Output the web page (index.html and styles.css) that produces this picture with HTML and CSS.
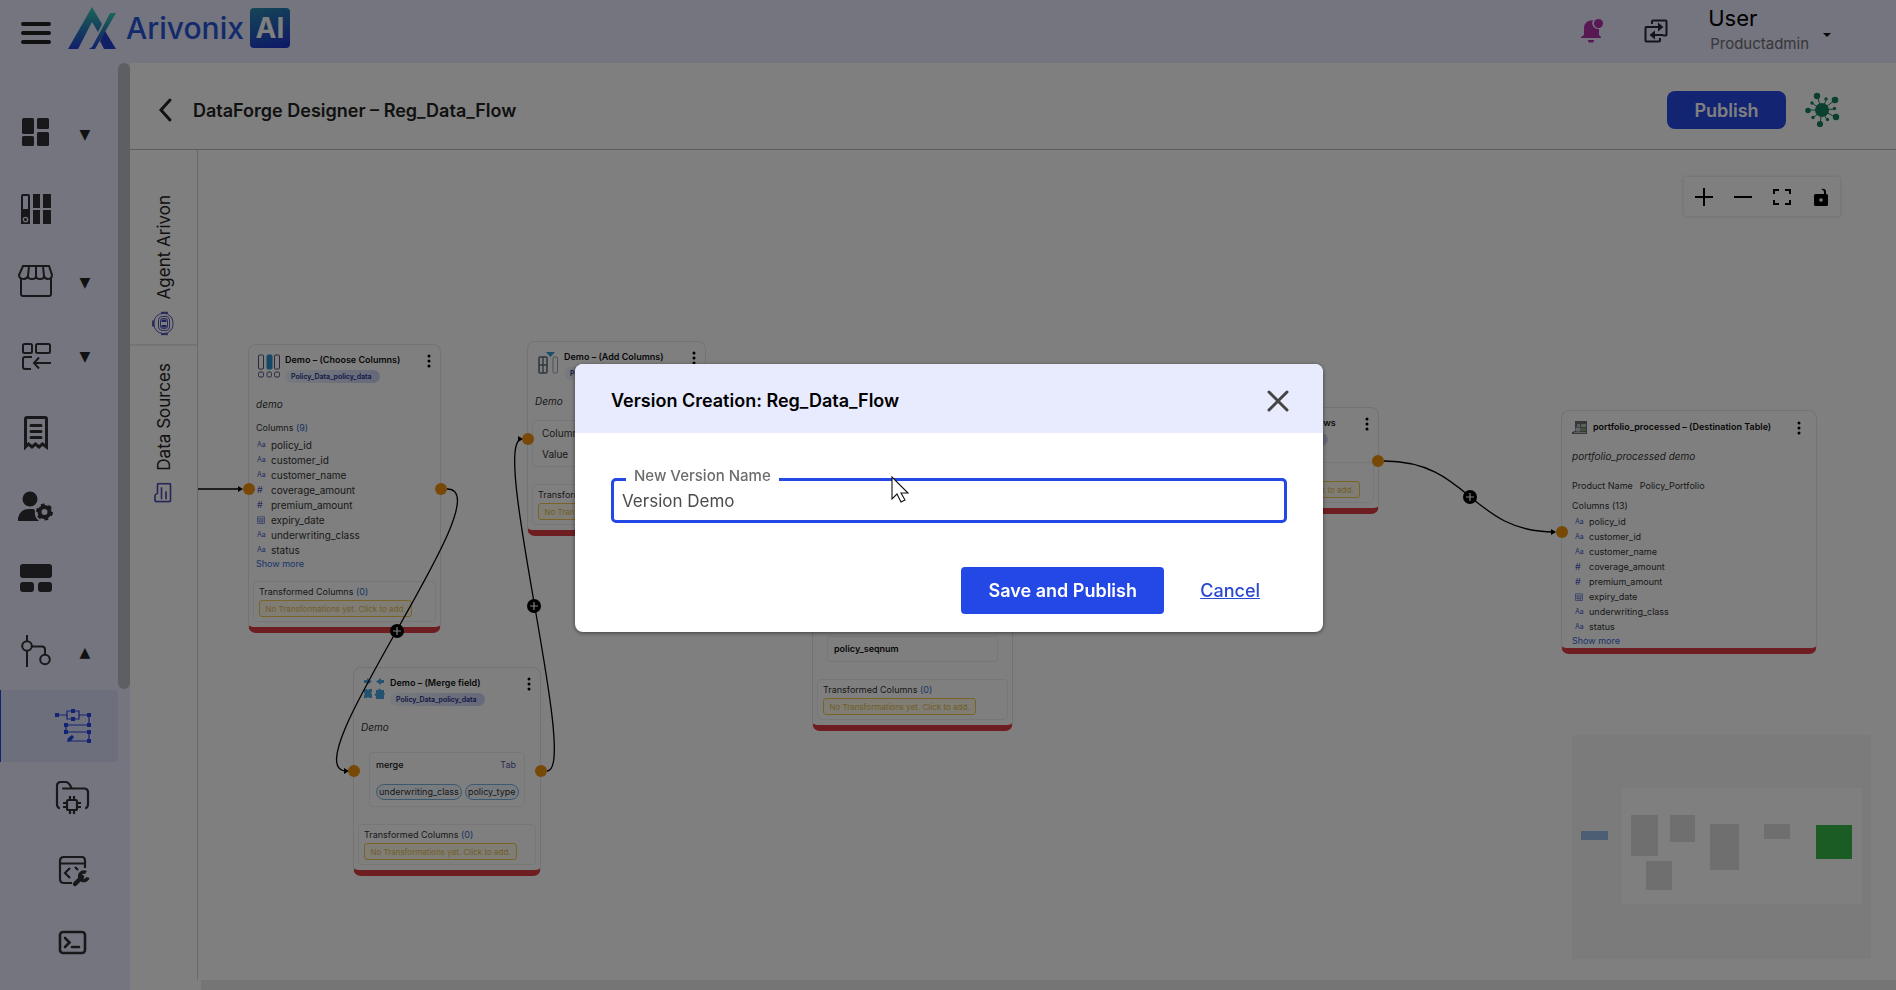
FILE: index.html
```html
<!DOCTYPE html>
<html lang="en">
<head>
<meta charset="utf-8">
<title>DataForge Designer</title>
<link rel="stylesheet" href="styles.css">
</head>
<body>
<svg class="defs" aria-hidden="true">
  <defs>
    <symbol id="dots" viewBox="0 0 4 14"><circle cx="2" cy="2" r="1.5"/><circle cx="2" cy="7" r="1.5"/><circle cx="2" cy="12" r="1.5"/></symbol>
    <symbol id="cal" viewBox="0 0 8 8"><path d="M.5.8h7v6.7h-7zM.5 2.8h7M.5 5.2h7M2.9 2.8v4.7M5.2 2.8v4.7" fill="none" stroke="currentColor" stroke-width=".6"/></symbol>
  </defs>
</svg>
<div class="app">
  <header class="topbar">
    <button class="icon-btn menu-btn" aria-label="Menu"><svg width="30" height="24" viewBox="0 0 30 24"><path d="M2 3h26M2 12h26M2 21h26" stroke="#222" stroke-width="4" stroke-linecap="round"/></svg></button>
    <a href="#" class="brand">
      <svg width="50" height="44" viewBox="0 0 50 44">
        <defs><linearGradient id="lg" x1="0" y1="0" x2="0" y2="1"><stop offset="0" stop-color="#36cdb6"/><stop offset=".5" stop-color="#2a80b8"/><stop offset="1" stop-color="#2340dd"/></linearGradient></defs>
        <path d="M25 1 35 18 31 26 25 16 11 43H1z" fill="url(#lg)"/>
        <path d="M43 7h6L28 43h-6l3-2L39 15z" fill="url(#lg)"/>
        <path d="m38 25 11 18H37l-4-8z" fill="#2340cc"/>
      </svg>
      <span class="brand-name">Arivonix</span><span class="brand-ai">AI</span>
    </a>
    <div class="top-actions">
      <button class="icon-btn" aria-label="Notifications"><svg width="24" height="24" viewBox="0 0 24 24" fill="#b030a8"><path d="M13 1.200A8 8 0 0 0 4 9v7l-3 2v1h20v-1l-2-2v-6A6 6 0 0 1 13 1.200zM8 21h6v1l-1 1.500H9L8 22z"/><circle cx="18.500" cy="4.500" r="4.500"/></svg></button>
      <button class="icon-btn" aria-label="Switch"><svg width="24" height="24" viewBox="0 0 24 24" fill="none" stroke="#26263a" stroke-width="2"><path d="M8 5V2.500q0-1 1-1h12.500q1 0 1 1v13q0 1-1 1H19M16 19v2.500q0 1-1 1H2.500q-1 0-1-1V9q0-1 1-1H12"/><path d="M10 8h6M8 16h11"/><path d="m14 3.500 5.500 4.500-5.500 4.500zM11 11.500 5.500 16l5.500 4.500z" fill="#26263a" stroke="none"/></svg></button>
      <div class="user">
        <div><div class="user-name">User</div><div class="user-role">Productadmin</div></div>
        <button class="icon-btn caret" aria-label="Account menu"><svg width="8" height="4" viewBox="0 0 8 4"><path d="M0 0h8L4 4z" fill="#111"/></svg></button>
      </div>
    </div>
  </header>

  <div class="body">
    <nav class="sidebar">
      <ul class="nav">
        <li><a href="#" aria-label="Dashboard"><svg width="36" height="44" viewBox="0 0 36 44" fill="#303034"><rect x="4" y="6" width="12" height="16" rx="1.500"/><rect x="19" y="6" width="12" height="11" rx="1.500"/><rect x="4" y="24" width="12" height="10" rx="1.500"/><rect x="19" y="20" width="12" height="14" rx="1.500"/></svg><span>▼</span></a></li>
        <li><a href="#" aria-label="Catalog"><svg width="36" height="44" viewBox="0 0 36 44" fill="#303034"><path d="M5 8h5a2 2 0 0 1 2 2v28H3V10a2 2 0 0 1 2-2zm0 2v13h5V10z" fill-rule="evenodd"/><circle cx="7.500" cy="33.500" r="2.200" fill="none" stroke="#e0e0ea" stroke-width="1.300"/><path d="M15 8h7v14h-7zM25 8h8v14h-8zM15 24h7v14h-7zM25 24h8v14h-8z"/></svg></a></li>
        <li><a href="#" aria-label="Marketplace"><svg width="36" height="44" viewBox="0 0 36 44" fill="none" stroke="#303034" stroke-width="2"><path d="M5 6h26l3 9c0 5-7 5-8 1 0 4-8 4-8 0 0 4-8 4-8 0-1 4-9 4-9-1zM11 6l-1 10M18 6v10M25 6l1 10M3 18v16q0 2 2 2h26q2 0 2-2V18"/></svg><span>▼</span></a></li>
        <li><a href="#" aria-label="Ingest"><svg width="36" height="44" viewBox="0 0 36 44" fill="none" stroke="#303034" stroke-width="2"><rect x="5" y="10" width="9" height="9" rx="1.500"/><rect x="18" y="10" width="14" height="9" rx="1.500"/><path d="M14 23H7q-2 0-2 2v8q0 2 2 2h6M33 29H16M21 23.500 16 29l5 5.500"/></svg><span>▼</span></a></li>
        <li><a href="#" aria-label="Reports"><svg width="36" height="44" viewBox="0 0 36 44" fill="none" stroke="#303034" stroke-width="3"><path d="M7.500 39V11q0-1.500 1.500-1.500h18q1.500 0 1.500 1.500v28l-4-3-3.500 3-3.500-3-3.500 3-3.500-3z"/><path d="M13 17.500h10M13 23.500h10M13 29.500h10" stroke-linecap="round"/></svg></a></li>
        <li><a href="#" aria-label="User settings"><svg width="36" height="44" viewBox="0 0 36 44" fill="#303034"><circle cx="12" cy="17" r="7.500"/><path d="M0 39v-3q2-9 11-9h5l1 2q-1 6 4 10z"/><circle cx="26.500" cy="30" r="5" fill="none" stroke="#303034" stroke-width="4"/><circle cx="26.500" cy="30" r="7" fill="none" stroke="#303034" stroke-width="3" stroke-dasharray="3.600 3.730"/></svg></a></li>
        <li><a href="#" aria-label="Layouts"><svg width="36" height="44" viewBox="0 0 36 44" fill="#303034"><rect x="2" y="8" width="32" height="14" rx="3"/><rect x="2" y="26" width="14" height="10" rx="3"/><rect x="20" y="26" width="14" height="10" rx="3"/></svg></a></li>
        <li><a href="#" aria-label="Pipelines"><svg width="36" height="44" viewBox="0 0 36 44" fill="none" stroke="#303034" stroke-width="2"><path d="M9 5v6M9 21v16M14 16.500h10q3 0 3 3V24"/><circle cx="9" cy="16" r="4.800"/><circle cx="27" cy="29.500" r="4.800"/></svg><span>▲</span></a></li>
      </ul>
      <ul class="subnav">
        <li class="active"><a href="#" aria-label="Designer"><svg width="36" height="36" viewBox="0 0 36 36" fill="#2647e8"><path d="M2 7h10V3h12v4h10v10H11v7h23v9H14" fill="none" stroke="#2647e8" stroke-width="1.200"/><path d="M12 7v4h12V7" fill="none" stroke="#2647e8" stroke-width="1.200"/><path d="M0 5h4v4H0zM16 1h4v4h-4zM16 9h4v4h-4zM32 5h4v4h-4zM32 15h4v4h-4zM9 15h4v4H9zM9 22h4v4H9zM32 22h4v4h-4zM32 31h4v4h-4zM12 34l1-4 4-3 2 2-3 4z"/></svg></a></li>
        <li><a href="#" aria-label="Models"><svg width="36" height="36" viewBox="0 0 36 36" fill="none" stroke="#303034" stroke-width="2.200"><path d="M4 28q-2-1-2-4V6q0-4 4-4h5q2 0 4 3l1.500 3M8 8.500h21q4 0 4 4V24q0 3-2 4" stroke-linecap="round"/><rect x="12" y="20" width="10" height="10" rx="1.500"/><path d="M15 16v4M19 16v4M15 30v4M19 30v4M8 23h4M8 27h4M22 23h4M22 27h4"/></svg></a></li>
        <li><a href="#" aria-label="Code tools"><svg width="36" height="36" viewBox="0 0 36 36" fill="none" stroke="#303034" stroke-width="2.200"><path d="M17 31H9q-4 0-4-4V9q0-4 4-4h18q3 0 3 4v7M5 11.500h25M15 16l-5 5 5 5M20 15l3 3"/><path d="m20 32 7-7" stroke-width="4.500" stroke-linecap="round"/><path d="M31 20.500a4.300 4.300 0 1 0 2 5" stroke-width="3.500"/></svg></a></li>
        <li><a href="#" aria-label="Console"><svg width="36" height="36" viewBox="0 0 36 36" fill="none" stroke="#303034" stroke-width="2.600"><rect x="5" y="8" width="25" height="21" rx="3"/><path d="m10 14 4.500 4.500L10 23M17 23h7" stroke-linecap="round"/></svg></a></li>
      </ul>
      <div class="nav-scroll"></div>
    </nav>

    <main class="main">
      <div class="titlebar">
        <button class="icon-btn" aria-label="Back"><svg width="15" height="26" viewBox="0 0 15 26"><path d="M12 3 3 13l9 10" fill="none" stroke="#222" stroke-width="3" stroke-linecap="round"/></svg></button>
        <h1>DataForge Designer – Reg_Data_Flow</h1>
        <button class="publish">Publish</button>
        <button class="icon-btn" aria-label="Lineage"><svg width="36" height="36" viewBox="0 0 36 36" fill="#178060"><path d="M18 18 13 4M18 18 31 8M18 18H4M18 18 31 25M18 18 16 32M18 18 22 8M18 18 8 11M18 18 30 17M18 18 9 26M18 18 23 28" stroke="#178060"/><circle cx="18" cy="18" r="7"/><circle cx="13" cy="4" r="3.200"/><circle cx="31" cy="8" r="3.300"/><circle cx="4" cy="18.500" r="2.800"/><circle cx="32" cy="25" r="3.200"/><circle cx="16" cy="32" r="3.100"/><circle cx="22" cy="7" r="1.700"/><circle cx="8" cy="11" r="1.700"/><circle cx="30.500" cy="16.500" r="1.700"/><circle cx="9" cy="25.500" r="1.700"/><circle cx="23.500" cy="27.500" r="1.700"/></svg></button>
      </div>
      <div class="workspace">
        <div class="tabs">
          <button class="tab"><svg width="22" height="24" viewBox="0 0 22 24" fill="none" stroke="#5555b8"><rect x="2" y="2" width="19" height="20" rx="9"/><rect x="6.500" y="5" width="11" height="14" rx="3.500"/><rect x="8.500" y="7" width="7" height="10" rx="2"/><path d="M9.500 8h5v2.500h-5zM9.500 13.500h5V16h-5z" fill="#4040b8" stroke="none"/><path d="M9 1.200h7M9 22.800h7M1.200 9v6" stroke-width="2.200"/></svg>Agent Arivon</button>
          <button class="tab"><svg width="18" height="20" viewBox="0 0 18 20" fill="none" stroke="#4648b0" stroke-width="1.600"><path d="M5 1h10.500q1 0 1 1v16q0 1-1 1H2q-1 0-1-1v-5q0-1 1-1.500l1.500-.8V2q0-1 1-1zM7.500 4.500v12M12 8.500v8"/></svg>Data Sources</button>
        </div>
        <div class="canvas">
          <article class="node n-choose">
            <div class="node-head">
              <svg width="22" height="24" viewBox="0 0 22 24" fill="none" stroke="#55557a"><rect x=".5" y="1" width="5" height="14" rx="1"/><rect x="9" y="1" width="5" height="14" rx="1" fill="#2a90cc" stroke="#2a90cc"/><rect x="16.500" y="1" width="5" height="14" rx="1"/><rect x=".5" y="18" width="5" height="5" rx="1.500"/><rect x="9" y="18" width="4.500" height="5" rx="1.500"/><rect x="16.500" y="18" width="5" height="5" rx="1.500"/></svg>
              <div><h2>Demo – (Choose Columns)</h2><span class="chip">Policy_Data_policy_data</span></div>
              <button class="icon-btn" aria-label="More"><svg width="4" height="14"><use href="#dots"/></svg></button>
            </div>
            <p class="desc">demo</p>
            <p class="cols-title">Columns <span>(9)</span></p>
            <ul class="cols">
              <li><i>Aa</i>policy_id</li><li><i>Aa</i>customer_id</li><li><i>Aa</i>customer_name</li><li><i class="hash">#</i>coverage_amount</li><li><i class="hash">#</i>premium_amount</li><li><i><svg width="8" height="8"><use href="#cal"/></svg></i>expiry_date</li><li><i>Aa</i>underwriting_class</li><li><i>Aa</i>status</li>
            </ul>
            <a href="#" class="more">Show more</a>
            <div class="trans"><p>Transformed Columns <span>(0)</span></p><button>No Transformations yet. Click to add.</button></div>
          </article>

          <article class="node n-add">
            <div class="node-head">
              <svg width="22" height="24" viewBox="0 0 22 24" fill="none" stroke="#607080"><rect x="2" y="6" width="8" height="16" rx="1" stroke-width="1.600"/><path d="M6 6v16M2 14h8" stroke-width="1.400"/><rect x="16" y="6" width="4.500" height="16" rx="1" stroke="#a0a0b0"/><path d="M9 1h9l-4.500 5z" fill="#3898d8" stroke="none"/></svg>
              <div><h2>Demo – (Add Columns)</h2><span class="chip">Policy_Data_policy_data</span></div>
              <button class="icon-btn" aria-label="More"><svg width="4" height="14"><use href="#dots"/></svg></button>
            </div>
            <p class="desc">Demo</p>
            <div class="pairs"><p>Column Name</p><p>Value</p></div>
            <div class="trans"><p>Transformed Columns <span>(0)</span></p><button>No Transformations yet. Click to add.</button></div>
          </article>

          <article class="node n-merge">
            <div class="node-head">
              <svg width="22" height="24" viewBox="0 0 22 24" fill="#4aa5dc"><path d="M1 3h3V1l5 3.500L4 8V6H1zM21 3h-3V1l-5 3.500L18 8V6h3zM1 12h3q1 2 2 0h3v3q-2 1 0 2v4H6q-1-2-2 0H1v-3q2-1 0-2zM13 13h2q1-3 3 0h3v3q2 1 0 2v4h-8v-3q-3-1 0-3z"/></svg>
              <div><h2>Demo – (Merge field)</h2><span class="chip">Policy_Data_policy_data</span></div>
              <button class="icon-btn" aria-label="More"><svg width="4" height="14"><use href="#dots"/></svg></button>
            </div>
            <p class="desc">Demo</p>
            <div class="merge"><div class="merge-row"><b>merge</b><span>Tab</span></div><div class="pills"><span>underwriting_class</span><span>policy_type</span></div></div>
            <div class="trans"><p>Transformed Columns <span>(0)</span></p><button>No Transformations yet. Click to add.</button></div>
          </article>

          <article class="node n-seq">
            <div class="seq"><b>policy_seqnum</b></div>
            <div class="trans"><p>Transformed Columns <span>(0)</span></p><button>No Transformations yet. Click to add.</button></div>
          </article>

          <article class="node n-rows">
            <div class="node-head">
              <svg width="22" height="24"></svg>
              <div><h2>Demo – (Combine Rows</h2><span class="chip">Policy_Data_policy_data</span></div>
              <button class="icon-btn" aria-label="More"><svg width="4" height="14"><use href="#dots"/></svg></button>
            </div>
            <div class="trans"><p>Transformed Columns <span>(0)</span></p><button>No Transformations yet. Click to add.</button></div>
          </article>

          <article class="node n-dest">
            <div class="node-head">
              <svg width="16" height="14" viewBox="0 0 16 14"><path d="M3 0h12v13H0v-2l3-1z" fill="#707078"/><path d="M5 3h3v3H5zM9 3h5v3H9z" fill="#b8c0b8"/><path d="M9 7h5v3H9z" fill="#7aa870"/><path d="M4 7h4v3H4zM2 11.500h12" fill="#d0d0d8" stroke="#c0c0c8"/></svg>
              <div><h2>portfolio_processed – (Destination Table)</h2></div>
              <button class="icon-btn" aria-label="More"><svg width="4" height="14"><use href="#dots"/></svg></button>
            </div>
            <p class="desc">portfolio_processed demo</p>
            <p class="product"><span>Product Name</span><span>Policy_Portfolio</span></p>
            <p class="cols-title">Columns (13)</p>
            <ul class="cols">
              <li><i>Aa</i>policy_id</li><li><i>Aa</i>customer_id</li><li><i>Aa</i>customer_name</li><li><i class="hash">#</i>coverage_amount</li><li><i class="hash">#</i>premium_amount</li><li><i><svg width="8" height="8"><use href="#cal"/></svg></i>expiry_date</li><li><i>Aa</i>underwriting_class</li><li><i>Aa</i>status</li>
            </ul>
            <a href="#" class="more">Show more</a>
          </article>

          <svg class="edges" viewBox="198 150 1698 840" width="1698" height="840" aria-hidden="true">
            <g fill="none" stroke="#000" stroke-width="1.300">
              <path d="M198 489h42"/>
              <path d="M447 489C507 489 287 771 347 771"/>
              <path d="M547 771C580 771 489 439 522 439"/>
              <path d="M1384 461C1470 461 1470 532 1555 532"/>
            </g>
            <path d="M238 486v6l5-3zM344 768v6l5-3zM518 436v6l5-3zM1551 529v6l5-3z"/>
            <g fill="#f0900c"><circle cx="249" cy="489" r="6"/><circle cx="441" cy="489" r="6"/><circle cx="528" cy="439" r="6"/><circle cx="354" cy="771" r="6"/><circle cx="541" cy="771" r="6"/><circle cx="1378" cy="461" r="6"/><circle cx="1562" cy="532" r="6"/></g>
            <circle cx="397" cy="631" r="7"/><circle cx="534" cy="606" r="7"/><circle cx="1470" cy="497" r="7"/>
            <path d="M393 631h8M397 627v8M530 606h8M534 602v8M1466 497h8M1470 493v8" stroke="#fff" stroke-width="1.200"/>
          </svg>

          <div class="controls">
            <button class="icon-btn" aria-label="Zoom in"><svg width="18" height="18" viewBox="0 0 18 18"><path d="M0 9h18M9 0v18" stroke="#000" stroke-width="2"/></svg></button>
            <button class="icon-btn" aria-label="Zoom out"><svg width="18" height="18" viewBox="0 0 18 18"><path d="M0 9h18" stroke="#000" stroke-width="2"/></svg></button>
            <button class="icon-btn" aria-label="Fit view"><svg width="18" height="18" viewBox="0 0 18 18"><path d="M1 6V2h5M12 2h5v4M17 12v4h-5M6 16H1v-4" fill="none" stroke="#000" stroke-width="2"/></svg></button>
            <button class="icon-btn" aria-label="Toggle lock"><svg width="14" height="18" viewBox="0 0 14 18"><path d="M1.500 6H10V4q0-2-3-3 5-1 5 3v2h.5Q14 6 14 7.500v9q0 1.500-1.500 1.500h-11Q0 18 0 16.500v-9Q0 6 1.500 6z"/><circle cx="7" cy="12" r="1.800" fill="#fff"/></svg></button>
          </div>

          <svg class="minimap" viewBox="0 0 299 224" width="299" height="224" role="img" aria-label="Mini map">
            <path d="M0 0h299v224H0z" fill="#f6f6f6"/><path d="M50 53h240v116H50z" fill="#fff"/>
            <path d="M59 80h27v41H59zM98 80h25v27H98zM74 126h26v29H74zM138 89h29v46h-29zM192 89h26v15h-26z" fill="#dedede"/>
            <path d="M9 96h27v9H9z" fill="#96bde8"/><path d="M244 90h36v34h-36z" fill="#35b848"/>
          </svg>
          <div class="hscroll"></div>
        </div>
      </div>
    </main>
  </div>
</div>

<div class="backdrop">
  <form class="modal" role="dialog" aria-labelledby="dlg-title">
    <div class="modal-head">
      <h2 id="dlg-title">Version Creation: Reg_Data_Flow</h2>
      <button type="button" class="icon-btn" aria-label="Close"><svg width="22" height="22" viewBox="0 0 22 22"><path d="m2 2 18 18M20 2 2 20" stroke="#444" stroke-width="3" stroke-linecap="round"/></svg></button>
    </div>
    <div class="modal-body">
      <div class="field">
        <label for="vname">New Version Name</label>
        <input id="vname" type="text" value="Version Demo">
        <svg class="cursor" width="19" height="28" viewBox="0 0 19 28" aria-hidden="true"><path d="M1 1v22l5-5 4 8 4-2-4-7h7z" fill="#fff" stroke="#111" stroke-width="1.100"/></svg>
      </div>
      <div class="modal-actions">
        <button type="button" class="save">Save and Publish</button>
        <a href="#" class="cancel">Cancel</a>
      </div>
    </div>
  </form>
</div>
</body>
</html>
```
FILE: styles.css
```css
* { box-sizing: border-box; }
body { margin: 0; font-family: Inter, "Liberation Sans", sans-serif; color: #222; }
h1, h2, p, ul { margin: 0; padding: 0; }
ul { list-style: none; }
button { font-family: inherit; }
svg { display: block; flex: none; }
.defs { position: absolute; width: 0; height: 0; }
.icon-btn { display: block; border: 0; padding: 0; background: none; }

.app { height: 100vh; display: flex; flex-direction: column; overflow: hidden; background: #fff; }

/* Top bar */
.topbar { height: 63px; flex: none; display: flex; align-items: center; padding: 0 65px 7px 21px; background: #e8eafd; }
.menu-btn { padding-top: 10px; }
.brand { display: flex; align-items: center; margin-left: 16px; text-decoration: none; }
.brand-name { margin: 0 6px 0 9px; font-size: 30px; font-weight: 500; color: #2655d8; }
.brand-ai { width: 40px; height: 40px; border-radius: 4px; font-size: 28px; line-height: 40px; font-weight: 700; text-align: center; color: #fff; background: linear-gradient(165deg, #2a8cae, #1d2fd0); }
.top-actions { margin-left: auto; display: flex; align-items: center; gap: 40px; padding-top: 6px; }
.user { display: flex; align-items: center; gap: 14px; }
.user .caret { padding-top: 8px; }
.user-name { font-size: 22px; line-height: 26px; color: #000; }
.user-role { padding-left: 2px; font-size: 15px; line-height: 26px; color: #6e6e74; }

/* Side navigation */
.body { flex: 1; display: flex; min-height: 0; }
.sidebar { position: relative; width: 130px; flex: none; padding-top: 34px; background: #e8eafd; overflow: hidden; }
.nav li a { height: 74px; display: flex; align-items: center; gap: 24px; padding-left: 18px; color: #222; text-decoration: none; }
.nav span { width: 14px; font-family: "DejaVu Sans", sans-serif; font-size: 14px; text-align: center; }
.subnav { margin-top: 1px; }
.subnav li { width: 118px; border-left: 1px solid transparent; }
.subnav a { height: 72px; display: flex; align-items: center; padding-left: 54px; }
.subnav .active { border-color: #2647e8; background: #dddff8; border-radius: 0 2px 2px 0; }
.nav-scroll { position: absolute; top: 0; right: 0; width: 12px; height: 67.5%; border-radius: 6px; background: #bcbec6; }

/* Title bar */
.main { flex: 1; min-width: 0; display: flex; flex-direction: column; }
.titlebar { height: 87px; flex: none; display: flex; align-items: center; padding: 8px 56px 0 28px; border-bottom: 1px solid #bbb; }
.titlebar h1 { margin: 0 auto 0 20px; font-size: 18px; font-weight: 600; }
.publish { margin-right: 18px; width: 119px; height: 38px; border: 0; border-radius: 8px; background: #2448e5; color: #fff; font-size: 18px; font-weight: 600; }

/* Vertical tabs */
.workspace { flex: 1; display: flex; min-height: 0; }
.tabs { width: 68px; flex: none; margin-bottom: 10px; border-right: 1px solid #d4d4d4; display: flex; flex-direction: column; }
.tab { width: 67px; display: flex; align-items: center; gap: 12px; border: 0; background: none; padding: 9px 0 45px; writing-mode: vertical-rl; transform: rotate(180deg); font-size: 17px; color: #222; }
.tab svg { transform: rotate(180deg); }
.tab:first-child { border-top: 1px solid #d4d4d4; }
.tab + .tab { padding-bottom: 18px; }

/* Flow canvas */
.canvas { position: relative; flex: 1; overflow: hidden; }
.node { position: absolute; border: 1px solid #e6e6e6; border-bottom: 6px solid #dc3c40; border-radius: 8px; background: #fff; padding-top: 9px; font-size: 9px; color: #333; }
.n-choose { left: 50px; top: 194px; width: 193px; }
.n-add { left: 329px; top: 191px; width: 179px; }
.n-merge { left: 155px; top: 517px; width: 188px; }
.n-seq { left: 614px; top: 266px; width: 201px; }
.n-rows { left: 998px; top: 257px; width: 183px; }
.n-dest { left: 1363px; top: 260px; width: 256px; }
.node-head { display: flex; align-items: flex-start; gap: 5px; padding: 0 9px; }
.node-head h2 { font-size: 9px; line-height: 12px; font-weight: 600; color: #111; white-space: nowrap; }
.node-head .icon-btn { margin-left: auto; }
.chip { display: block; width: 95px; margin-top: 4px; border-radius: 7px; padding-left: 6px; font-size: 7px; line-height: 13px; font-weight: 600; color: #24308c; background: linear-gradient(90deg, #eef4fb, #cdd2f6); white-space: nowrap; overflow: hidden; }
.desc { margin-top: 14px; padding-left: 7px; font-size: 10px; line-height: 14px; font-style: italic; }
.cols-title { margin: 10px 0 2px; padding-left: 7px; line-height: 14px; }
.cols-title span, .trans p span { color: #3468c0; }
.cols li { display: flex; align-items: center; height: 15px; padding-left: 8px; font-size: 10px; }
.cols i { width: 14px; font-size: 7px; font-style: normal; color: #4a5cc8; }
.cols .hash { font-size: 9px; }
.more { display: block; padding-left: 7px; line-height: 13px; color: #3468d8; text-decoration: none; }
.trans { margin: 11px 4px 5px; border: 1px solid #eee; border-radius: 4px; padding: 4px 5px; }
.trans p { line-height: 12px; margin-bottom: 2px; }
.trans button { display: block; width: 153px; height: 17px; border: 1px solid #f0c850; border-radius: 3px; background: #fffbe8; padding: 0; color: #e5bb50; font-size: 8px; white-space: nowrap; }
.pairs { margin: 12px 4px 17px; border: 1px solid #eee; border-radius: 4px; padding: 2px 9px 1px; font-size: 10px; line-height: 21px; }
.merge { margin: 18px 15px 17px; border: 1px solid #eee; border-radius: 4px; padding: 5px 6px 6px; }
.merge-row { display: flex; justify-content: space-between; padding-right: 2px; line-height: 14px; color: #111; }
.merge-row b { font-weight: 500; }
.merge-row span { color: #5a60a0; }
.pills { display: flex; gap: 3px; margin-top: 12px; }
.pills span { border: 1px solid #78b0dc; border-radius: 8px; padding: 0 2px; line-height: 14px; background: #f3f9fe; }
.seq { margin: 210px 14px 17px; border: 1px solid #eee; border-radius: 4px; padding: 0 6px; line-height: 24px; color: #111; }
.seq b { font-weight: 600; }
.n-rows .trans { margin-top: 16px; }
.n-dest { padding-top: 10px; }
.n-dest .node-head { padding: 0 15px 0 10px; }
.n-dest .desc { margin-top: 14px; padding-left: 10px; }
.product { display: flex; gap: 7px; margin-top: 16px; padding-left: 10px; line-height: 14px; }
.n-dest .cols-title { margin: 6px 0 1px; padding-left: 10px; }
.n-dest .cols li { padding-left: 13px; font-size: 9px; }
.n-dest .more { padding-left: 10px; line-height: 14px; }
.edges { position: absolute; left: 0; top: 0; }
.controls { position: absolute; right: 56px; top: 27px; display: flex; padding: 0; background: #fff; box-shadow: 0 0 4px rgba(0, 0, 0, .16); }
.controls .icon-btn { width: 39px; height: 39px; display: flex; align-items: center; justify-content: center; }
.minimap { position: absolute; right: 25px; bottom: 31px; }
.hscroll { position: absolute; left: 3px; right: 0; bottom: 0; height: 10px; background: #eaeaea; }

/* Dialog */
.backdrop { position: fixed; inset: 0; display: flex; align-items: center; justify-content: center; padding: 6px 0 0 2px; background: rgba(0, 0, 0, .5); }
.modal { width: 748px; border-radius: 8px; overflow: hidden; background: #fff; box-shadow: 0 1px 4px rgba(0, 0, 0, .5); }
.modal-head { height: 69px; display: flex; align-items: center; justify-content: space-between; padding: 4px 34px 0 36px; background: #e8eafd; }
.modal-head h2 { font-size: 18px; font-weight: 600; color: #000; }
.modal-body { padding: 45px 36px 18px; }
.field { position: relative; }
.field label { position: absolute; left: 15px; top: -11px; padding: 0 8px; background: #fff; font-size: 15px; line-height: 18px; font-weight: 500; color: #6c6c6c; }
.field input { display: block; width: 100%; height: 45px; border: 3px solid #2448e5; border-radius: 5px; padding: 0 8px; font-family: inherit; font-size: 17px; color: #4c4c4c; background: #fff; outline: none; }
.cursor { position: absolute; left: 280px; top: -2px; }
.modal-actions { display: flex; align-items: center; justify-content: flex-end; gap: 36px; margin-top: 44px; padding-right: 27px; }
.save { width: 203px; height: 47px; border: 0; border-radius: 4px; background: #2448e5; color: #fff; font-size: 18px; font-weight: 600; }
.cancel { font-size: 18px; font-weight: 500; color: #2a48d0; }
```
